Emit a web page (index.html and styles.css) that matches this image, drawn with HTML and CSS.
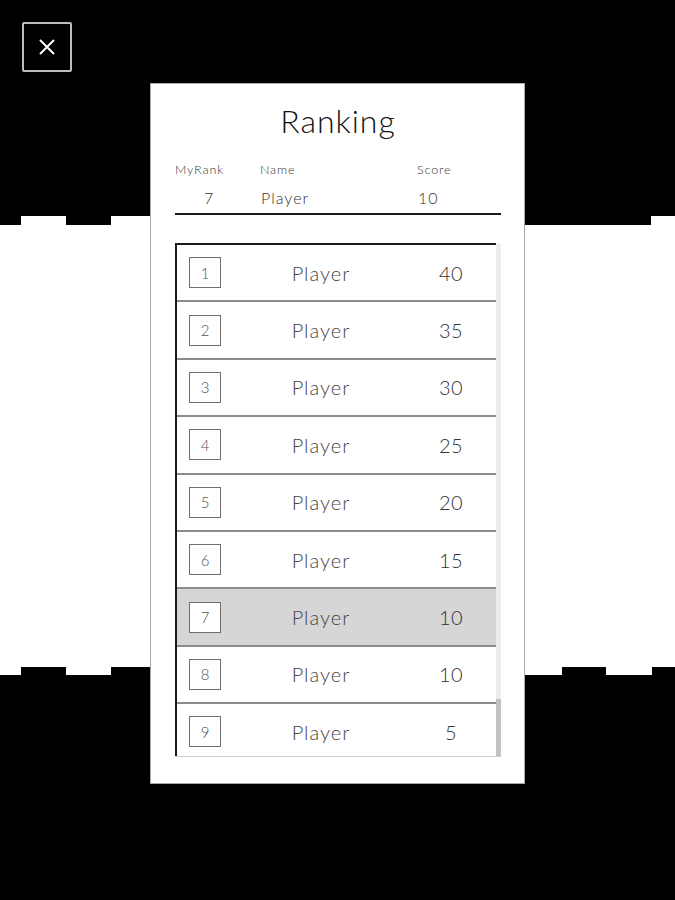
FILE: index.html
```html
<!DOCTYPE html>
<html>
  <head>
    <title>Ranking</title>
    <meta charset="UTF-8">
    <meta name="viewport" content="width=device-width, initial-scale=1.0">
    <link rel="stylesheet" href="styles.css">
  </head>
  <body>
    <!-- wall backdrop behind the dialog -->
    <svg class="backdrop" width="675" height="900" viewBox="0 0 675 900">
      <path fill="#fff" d="M0 225 H21 V216 H66 V225 H111 V216 H525 V225 H651 V216 H675 V667 H652 V675 H606 V667 H562 V675 H525 V667 H111 V675 H66 V667 H21 V675 H0 Z"/>
    </svg>

    <div class="page">
      <button class="close-btn" type="button" aria-label="Close">
        <svg width="18" height="18" viewBox="0 0 18 18">
          <path d="M2 2 L16 16 M16 2 L2 16" stroke="#fff" stroke-width="2" fill="none"/>
        </svg>
      </button>

      <div class="panel">
        <h1>Ranking</h1>

        <div class="my-rank">
          <span class="label">MyRank</span>
          <span class="label">Name</span>
          <span class="label">Score</span>
          <span class="value rank-value">7</span>
          <span class="value">Player</span>
          <span class="value">10</span>
        </div>

        <div class="list">
          <div class="rows" id="rows"></div>
          <div class="scrollbar"><div class="thumb"></div></div>
        </div>
      </div>
    </div>

    <script>
    var players = [
      {rank: 1, name: 'Player', score: 40},
      {rank: 2, name: 'Player', score: 35},
      {rank: 3, name: 'Player', score: 30},
      {rank: 4, name: 'Player', score: 25},
      {rank: 5, name: 'Player', score: 20},
      {rank: 6, name: 'Player', score: 15},
      {rank: 7, name: 'Player', score: 10},
      {rank: 8, name: 'Player', score: 10},
      {rank: 9, name: 'Player', score: 5}
    ];
    var myRank = 7;

    var html = '';
    players.forEach(p => {
      html += `<div class="row${p.rank === myRank ? ' mine' : ''}">`;
      html += `<span class="num">${p.rank}</span>`;
      html += `<span class="name">${p.name}</span>`;
      html += `<span class="score">${p.score}</span>`;
      html += '</div>';
    });
    document.getElementById('rows').innerHTML = html;
    </script>
  </body>
</html>
```

FILE: styles.css
```css
body {
    margin: 0;
    background-color: black;
    font-family: Lato, "Open Sans", sans-serif;
}
.backdrop {
    position: absolute;
    top: 0;
    left: 0;
    z-index: 0;
}
.page {
    position: relative;
    z-index: 1;
    padding: 22px;
}
.close-btn {
    display: flex;
    align-items: center;
    justify-content: center;
    width: 50px;
    height: 50px;
    padding: 0;
    background-color: black;
    border: 2px solid #bdbdbd;
    border-radius: 2px;
    cursor: pointer;
}
.panel {
    width: 326px;
    height: 699px;
    margin: 11px auto 0;
    padding: 0 23px 0 24px;
    background-color: white;
    border: 1px solid #a8a8a8;
}
.panel h1 {
    margin: 0;
    padding-top: 18px;
    height: 45px;
    font-size: 32px;
    font-weight: 300;
    line-height: 38px;
    text-align: center;
    color: #111;
    letter-spacing: 1px;
}
.my-rank {
    display: grid;
    grid-template-columns: 85px 157px 1fr;
    margin-top: 15px;
    border-bottom: 2px solid #1a1a1a;
    padding-bottom: 4px;
}
.my-rank .label {
    font-size: 12.5px;
    font-weight: 300;
    letter-spacing: 0.9px;
    line-height: 16px;
    color: #333;
}
.my-rank .value {
    font-size: 16px;
    font-weight: 300;
    letter-spacing: 1px;
    line-height: 22px;
    margin-top: 9px;
    color: #333;
    padding-left: 1px;
}
.my-rank .rank-value {
    padding-left: 29px;
}
.list {
    display: flex;
    height: 513px;
    margin-top: 28px;
    overflow: hidden;
    border-bottom: 1px solid #cfcfcf;
}
.rows {
    flex: 1;
    border-top: 2px solid #1a1a1a;
    border-left: 2px solid #1a1a1a;
    overflow: hidden;
}
.row {
    display: grid;
    grid-template-columns: 32px 200px 60px;
    align-items: center;
    height: 55.4px;
    padding-left: 12px;
    border-bottom: 2px solid #8c8c8c;
    color: #444;
}
.row.mine {
    background-color: #d6d6d6;
}
.row .num {
    display: flex;
    align-items: center;
    justify-content: center;
    width: 30px;
    height: 29px;
    border: 1.5px solid #707070;
    font-size: 15px;
    font-weight: 300;
    color: #555;
    background-color: white;
}
.row .name {
    text-align: center;
    font-size: 20px;
    font-weight: 300;
    letter-spacing: 1px;
}
.row .score {
    text-align: center;
    font-size: 20px;
    font-weight: 300;
    letter-spacing: 0.5px;
    color: #333;
}
.scrollbar {
    width: 5px;
    display: flex;
    flex-direction: column;
    justify-content: flex-end;
    background-color: #ececec;
    border-radius: 2px 2px 0 0;
}
.scrollbar .thumb {
    height: 57px;
    background-color: #c2c2c2;
}
```
